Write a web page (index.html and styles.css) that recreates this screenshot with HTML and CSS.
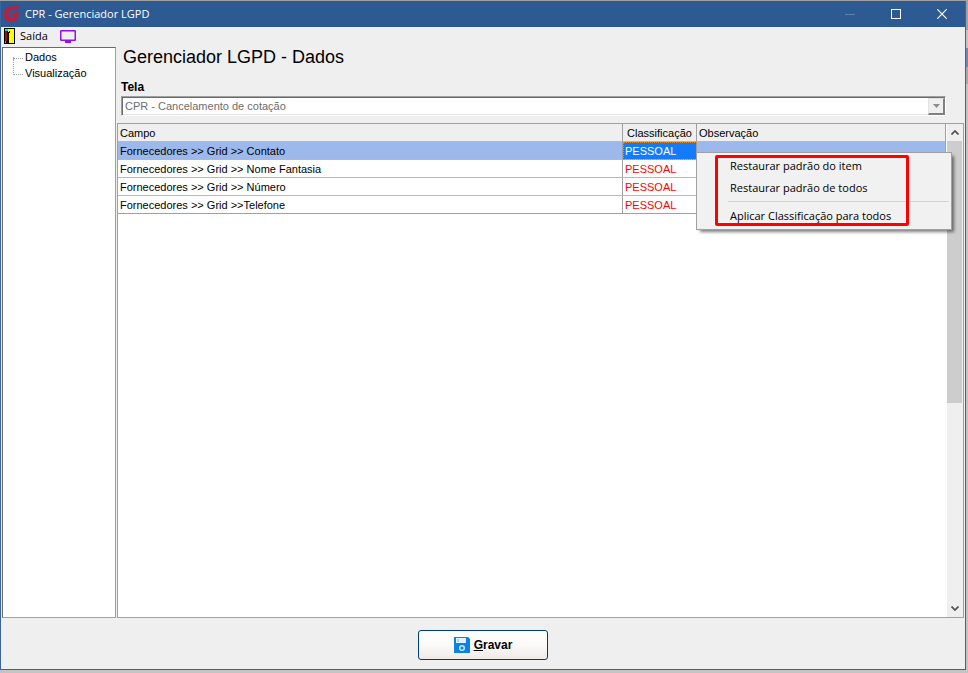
FILE: index.html
```html
<!DOCTYPE html>
<html lang="pt-BR">
<head>
  <meta charset="UTF-8" />
  <title>CPR - Gerenciador LGPD</title>
  <link rel="stylesheet" href="styles.css">
</head>
<body>

<div class="window">
  <header class="titlebar">
    <svg class="logo" viewBox="0 0 16 16" width="16" height="16" aria-hidden="true">
      <path d="M15.800 0 L12.500 4 H8.500 Q4.500 4 4.500 8 Q4.500 12 7.500 12 H9.500 L10.500 9.500 H7.500 L9 6.500 H15.500 L13 13.500 Q12 16 9 16 H6.500 Q0 16 0 8.500 Q0 0.500 7.500 0.500 Z" fill="#bb1f40"/>
    </svg>
    <h1>CPR - Gerenciador LGPD</h1>
    <div class="window-buttons">
      <button type="button" aria-label="Minimizar" disabled>
        <svg viewBox="0 0 10 10" width="10" height="10"><path d="M0 5.500 H10" stroke="#5f83b0" fill="none"/></svg>
      </button>
      <button type="button" aria-label="Maximizar">
        <svg viewBox="0 0 10 10" width="10" height="10"><rect x="0.500" y="0.500" width="9" height="9" stroke="#fff" fill="none"/></svg>
      </button>
      <button type="button" aria-label="Fechar">
        <svg viewBox="0 0 10 10" width="10" height="10"><path d="M0.300 0.300 L9.700 9.700 M9.700 0.300 L0.300 9.700" stroke="#fff" stroke-width="1.200" fill="none"/></svg>
      </button>
    </div>
  </header>

  <nav class="toolbar">
    <button type="button">
      <svg viewBox="0 0 11 16" width="11" height="16" aria-hidden="true" shape-rendering="crispEdges">
        <rect width="11" height="16" fill="#000"/>
        <rect x="4" y="1" width="6" height="14" fill="#ffff00"/>
        <rect x="1" y="1" width="3" height="2" fill="#00e0e0"/>
        <rect x="1" y="3" width="2" height="10" fill="#a01010"/>
        <rect x="3" y="4" width="2" height="11" fill="#000"/>
        <rect x="1" y="13" width="1" height="2" fill="#00c8d0"/>
        <rect x="5" y="3" width="1" height="2" fill="#000"/>
      </svg>
      Saída
    </button>
    <button type="button" aria-label="Monitor">
      <svg viewBox="0 0 16 13" width="16" height="13">
        <rect x="0.750" y="0.750" width="14.500" height="9.500" rx="0.500" stroke="#9010f0" stroke-width="1.500" fill="none"/>
        <path d="M5 11 H11 V13 H5 Z" fill="#9010f0"/>
      </svg>
    </button>
  </nav>

  <main class="content">
    <aside class="tree">
      <ul>
        <li><a href="#dados">Dados</a></li>
        <li><a href="#visualizacao">Visualização</a></li>
      </ul>
    </aside>

    <section class="panel">
      <div class="panel-head">
        <h2>Gerenciador LGPD - Dados</h2>
        <label for="tela">Tela</label>
        <div class="combo">
          <select id="tela" disabled>
            <option>CPR - Cancelamento de cotação</option>
          </select>
          <span class="combo-arrow">
            <svg viewBox="0 0 7 4" width="7" height="4"><path d="M0 0 H7 L3.500 4 Z" fill="#8c8c8c"/></svg>
          </span>
        </div>
      </div>

      <div class="grid">
        <div class="grid-body">
          <table>
            <colgroup>
              <col>
              <col class="col-class">
              <col class="col-obs">
            </colgroup>
            <thead>
              <tr><th>Campo</th><th class="center">Classificação</th><th>Observação</th></tr>
            </thead>
            <tbody>
              <tr class="selected"><td>Fornecedores &gt;&gt; Grid &gt;&gt; Contato</td><td class="level">PESSOAL</td><td></td></tr>
              <tr><td>Fornecedores &gt;&gt; Grid &gt;&gt; Nome Fantasia</td><td class="level">PESSOAL</td><td></td></tr>
              <tr><td>Fornecedores &gt;&gt; Grid &gt;&gt; Número</td><td class="level">PESSOAL</td><td></td></tr>
              <tr><td>Fornecedores &gt;&gt; Grid &gt;&gt;Telefone</td><td class="level">PESSOAL</td><td></td></tr>
            </tbody>
          </table>
        </div>
        <div class="scrollbar">
          <svg viewBox="0 0 8 5" width="8" height="5"><path d="M0.500 4.500 L4 1 L7.500 4.500" stroke="#505050" stroke-width="1.700" fill="none"/></svg>
          <div class="track"><div class="thumb"></div></div>
          <svg viewBox="0 0 8 5" width="8" height="5"><path d="M0.500 0.500 L4 4 L7.500 0.500" stroke="#505050" stroke-width="1.700" fill="none"/></svg>
        </div>

        <div class="context-menu" role="menu">
          <button type="button" role="menuitem">Restaurar padrão do item</button>
          <button type="button" role="menuitem">Restaurar padrão de todos</button>
          <hr>
          <button type="button" role="menuitem">Aplicar Classificação para todos</button>
          <div class="highlight"></div>
        </div>
      </div>
    </section>
  </main>

  <footer class="footer">
    <button type="button" class="save">
      <svg viewBox="0 0 16 16" width="16" height="16" aria-hidden="true">
        <path d="M0 0 H14 L16 2 V16 H0 Z" fill="#0a84e4"/>
        <rect x="2" y="1" width="10" height="5" fill="#e4f2fd"/>
        <rect x="3" y="2" width="2" height="3" fill="#a5d2f5"/>
        <circle cx="8" cy="11" r="2.300" stroke="#cfe8fb" stroke-width="1.400" fill="none"/>
      </svg>
      <span><u>G</u>ravar</span>
    </button>
  </footer>
</div>

</body>
</html>
```
FILE: styles.css
```css
* {
  box-sizing: border-box;
}

body {
  margin: 0;
  height: 100vh;
  padding: 1px 2px 3px 0;
  background: linear-gradient(#a0a0a0 0 30px, #c4c4c4 30px 48px, #7187b8 48px 67px, #a8a8a8 67px 84px, #c4c4c4 84px);
  font-family: "Liberation Sans", Arial, sans-serif;
  font-size: 11px;
  line-height: 14px;
  color: #000;
}

h1, h2, ul {
  margin: 0;
  padding: 0;
  font-weight: normal;
}

button {
  border: none;
  background: none;
  padding: 0;
  font: inherit;
  color: inherit;
}

svg {
  display: block;
  flex: none;
}

.window {
  display: flex;
  flex-direction: column;
  height: 100%;
  border: 1px solid #3a64a0;
  border-top: none;
  background: #efefef;
}

/* title bar */
.titlebar {
  display: flex;
  align-items: center;
  height: 26px;
  padding-left: 3px;
  background: #2d5a92;
  color: #fff;
}

.titlebar h1 {
  flex: 1;
  margin-left: 5px;
  font-family: "Open Sans", "Noto Sans", sans-serif;
  font-size: 11px;
}

.window-buttons {
  display: flex;
}

.window-buttons button {
  display: flex;
  align-items: center;
  justify-content: center;
  width: 46px;
  height: 26px;
}

/* toolbar */
.toolbar {
  display: flex;
  align-items: center;
  gap: 12px;
  height: 20px;
  padding: 0 0 2px 3px;
  font-family: "Open Sans", "Noto Sans", sans-serif;
  font-size: 11px;
}

.toolbar button {
  display: flex;
  align-items: center;
  gap: 5px;
}

.content {
  display: flex;
  flex: 1;
  gap: 1px;
  min-height: 0;
  padding: 0 1px;
}

/* tree */
.tree {
  width: 114px;
  padding: 1px 0 0 10px;
  border: 1px solid #a0a0a0;
  border-top-color: #696969;
  border-left-color: #696969;
  background: #fff;
}

.tree ul {
  list-style: none;
}

.tree li {
  position: relative;
  height: 16px;
  padding-left: 12px;
  line-height: 16px;
}

.tree li::before {
  content: "";
  position: absolute;
  left: 0;
  top: -8px;
  width: 9px;
  height: 17px;
  border-left: 1px dotted #a0a0a0;
  border-bottom: 1px dotted #a0a0a0;
}

.tree li:first-child::before {
  top: 8px;
  height: 1px;
}

.tree a {
  color: #000;
  text-decoration: none;
}

/* right side */
.panel {
  display: flex;
  flex: 1;
  flex-direction: column;
  min-width: 0;
}

.panel-head {
  padding: 0 18px 7px 4px;
}

.panel-head h2 {
  padding-left: 2px;
  font-size: 18px;
  line-height: 20px;
}

.panel-head label {
  display: block;
  margin: 13px 0 2px;
  font-size: 12px;
  font-weight: bold;
}

.combo {
  position: relative;
  height: 20px;
  padding: 1px;
  border: 1px solid #a0a0a0;
  border-right-color: #fff;
  border-bottom-color: #fff;
  box-shadow: inset 1px 1px #696969, inset -1px -1px #e3e3e3;
  background: #fff;
}

.combo select {
  display: block;
  width: 100%;
  height: 16px;
  padding: 0 20px 0 2px;
  border: none;
  appearance: none;
  background: #fff;
  font: inherit;
  color: #6d6d6d;
  opacity: 1;
}

.combo-arrow {
  position: absolute;
  top: 1px;
  right: 0;
  display: flex;
  align-items: center;
  justify-content: center;
  width: 17px;
  height: 17px;
  border: 1px solid #e3e3e3;
  border-right: 2px solid #808080;
  border-bottom: 2px solid #808080;
  background: #efefef;
}

/* grid */
.grid {
  position: relative;
  display: flex;
  flex: 1;
  border: 1px solid #a0a0a0;
  background: #fff;
}

.grid-body {
  flex: 1;
  min-width: 0;
  padding-right: 1px;
}

table {
  width: 100%;
  table-layout: fixed;
  border-collapse: separate;
  border-spacing: 0;
}

.col-class {
  width: 74px;
}

.col-obs {
  width: 249px;
}

th, td {
  height: 18px;
  padding: 0 2px;
  border-right: 1px solid #a0a0a0;
  border-bottom: 1px solid #b8b8b8;
  text-align: left;
  font-weight: normal;
  white-space: nowrap;
}

th {
  background: #efefef;
}

th.center {
  text-align: center;
}

tr:last-child td {
  border-bottom-color: #a0a0a0;
}

.level {
  color: #f00;
}

.selected td {
  background: #9db8eb;
}

.selected .level {
  background: #147bff;
  color: #fff;
  outline: 1px dotted #e08a1e;
  outline-offset: -1px;
}

/* scrollbar */
.scrollbar {
  display: flex;
  flex-direction: column;
  align-items: center;
  width: 16px;
  padding: 6px 0;
  background: #efefef;
}

.track {
  flex: 1;
  width: 100%;
  margin: 6px 0;
}

.thumb {
  height: 57%;
  margin-right: 1px;
  background: #cdcdcd;
}

/* popup menu */
.context-menu {
  position: absolute;
  top: 28px;
  right: 11px;
  width: 256px;
  padding: 2px;
  border: 1px solid #a0a0a0;
  background: #f1f1f1;
  box-shadow: 3px 3px 3px -1px rgba(0, 0, 0, 0.5);
  font-family: "Open Sans", "Noto Sans", sans-serif;
  font-size: 11px;
}

.context-menu button {
  display: block;
  width: 100%;
  height: 22px;
  padding-left: 31px;
  text-align: left;
}

.context-menu hr {
  height: 1px;
  margin: 2px 0 3px 29px;
  border: none;
  background: #d4d4d4;
}

.highlight {
  position: absolute;
  top: 2px;
  left: 18px;
  width: 194px;
  height: 71px;
  border: 3px solid #f00;
  border-radius: 2px;
  pointer-events: none;
}

/* footer */
.footer {
  display: flex;
  justify-content: center;
  align-items: center;
  height: 51px;
  padding-top: 3px;
}

.save {
  display: flex;
  align-items: center;
  justify-content: center;
  gap: 4px;
  width: 130px;
  height: 30px;
  border: 1px solid #003c74;
  border-radius: 3px;
  background: linear-gradient(#fff, #fbfaf9 50%, #eeeae7);
  font-size: 12px;
  font-weight: bold;
}
```
